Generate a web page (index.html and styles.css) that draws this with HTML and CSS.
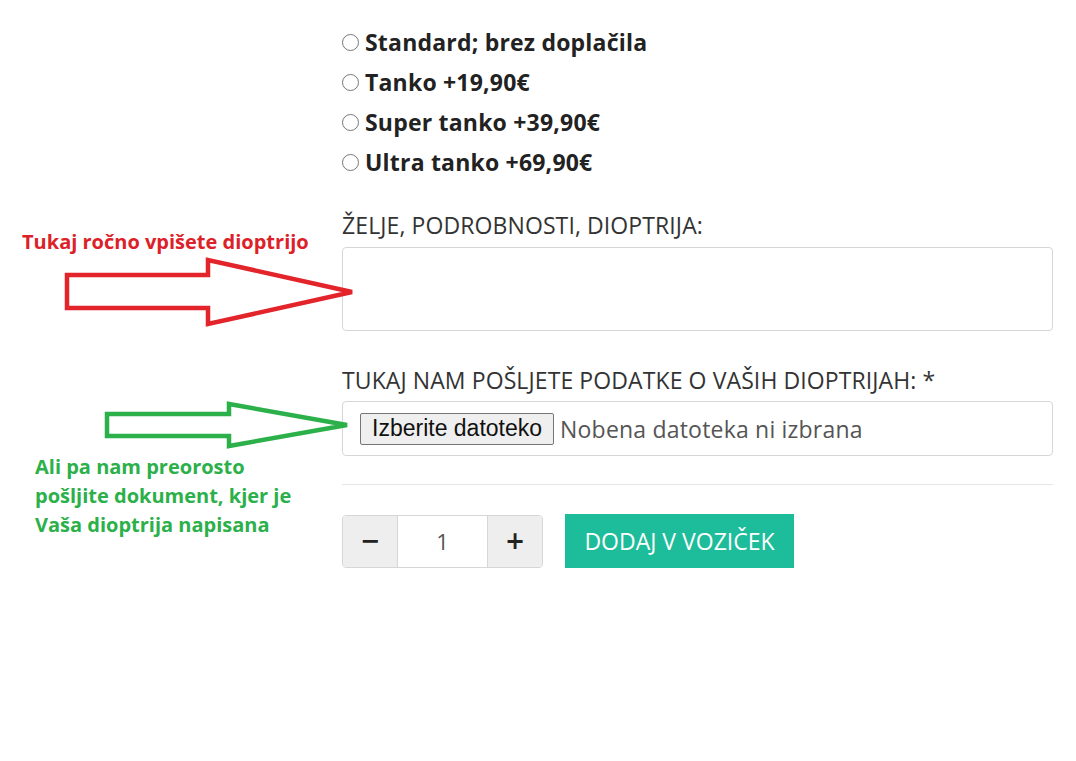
FILE: index.html
```html
<!DOCTYPE html>
<html lang="sl">
<head>
<meta charset="utf-8">
<link rel="stylesheet" href="styles.css">
</head>
<body>
<main class="form">
  <div class="options">
    <label class="opt"><input type="radio" name="d" class="radio"><span>Standard; brez doplačila</span></label>
    <label class="opt"><input type="radio" name="d" class="radio"><span>Tanko +19,90€</span></label>
    <label class="opt"><input type="radio" name="d" class="radio"><span>Super tanko +39,90€</span></label>
    <label class="opt"><input type="radio" name="d" class="radio"><span>Ultra tanko +69,90€</span></label>
  </div>
  <div class="field-label first">ŽELJE, PODROBNOSTI, DIOPTRIJA:</div>
  <div class="textarea"></div>
  <div class="field-label second">TUKAJ NAM POŠLJETE PODATKE O VAŠIH DIOPTRIJAH: *</div>
  <div class="filebox">
    <span class="filebtn">Izberite datoteko</span>
    <span class="filetext">Nobena datoteka ni izbrana</span>
  </div>
  <div class="rule"></div>
  <div class="cart">
    <div class="qty">
      <span class="qbtn minus">&#8722;</span>
      <span class="qval">1</span>
      <span class="qbtn plus">+</span>
    </div>
    <span class="add">DODAJ V VOZIČEK</span>
  </div>
</main>

<div class="note red-note">Tukaj ročno vpišete dioptrijo</div>
<div class="note green-note">Ali pa nam preorosto<br>pošljite dokument, kjer je<br>Vaša dioptrija napisana</div>
<svg class="arrows" width="1076" height="761" viewBox="0 0 1076 761">
  <polygon points="67,275 208,275 208,260 352,292 208,324 208,308 67,308" fill="none" stroke="#e3242b" stroke-width="4.5" stroke-linejoin="miter"/>
  <polygon points="107,414 229,414 229,404 347,425 229,446 229,436 107,436" fill="none" stroke="#2bb04a" stroke-width="4.5" stroke-linejoin="miter"/>
</svg>
</body>
</html>
```

FILE: styles.css
```css
html, body {
  margin: 0;
  padding: 0;
  background: #ffffff;
}
body {
  font-family: "Open Sans", "Liberation Sans", sans-serif;
  color: #333333;
  width: 1076px;
  height: 761px;
  position: relative;
  overflow: hidden;
}
.form {
  margin-left: 342px;
  width: 711px;
  padding-top: 22px;
}
.options {
  display: flex;
  flex-direction: column;
}
.opt {
  height: 40px;
  line-height: 40px;
  display: flex;
  align-items: center;
  gap: 6px;
  font-weight: 700;
  font-size: 23px;
  letter-spacing: 0.2px;
  color: #222222;
}
.radio {
  appearance: none;
  -webkit-appearance: none;
  width: 17px;
  height: 17px;
  margin: 0;
  border: 1px solid #767676;
  border-radius: 50%;
  background: #fff;
  box-sizing: border-box;
}
.field-label {
  font-size: 23px;
  line-height: 28px;
  letter-spacing: 0.1px;
  color: #333;
  white-space: nowrap;
}
.field-label.first { margin-top: 29px; }
.field-label.second { margin-top: 35px; }
.textarea {
  margin-top: 8px;
  height: 84px;
  border: 1px solid #d6d6d6;
  border-radius: 4px;
  box-sizing: border-box;
}
.filebox {
  margin-top: 7px;
  height: 55px;
  border: 1px solid #d6d6d6;
  border-radius: 4px;
  box-sizing: border-box;
  display: flex;
  align-items: center;
  padding-left: 17px;
  gap: 6px;
}
.filebtn {
  font-family: "Liberation Sans", Arial, sans-serif;
  font-size: 23px;
  color: #111;
  background: #efefef;
  border: 1px solid #767676;
  border-radius: 2px;
  height: 32px;
  box-sizing: border-box;
  padding: 0 11px 0 11px;
  display: flex;
  align-items: center;
}
.filetext {
  font-size: 23px;
  letter-spacing: 0.2px;
  color: #555;
}
.rule {
  margin-top: 28px;
  border-top: 1px solid #e5e5e5;
}
.cart {
  margin-top: 29px;
  display: flex;
  align-items: center;
  gap: 22px;
}
.qty {
  display: flex;
  width: 201px;
  height: 53px;
  border: 1px solid #d6d6d6;
  border-radius: 4px;
  overflow: hidden;
  box-sizing: border-box;
}
.qbtn {
  width: 55px;
  flex: none;
  box-sizing: border-box;
  background: #eeeeee;
  display: flex;
  align-items: center;
  justify-content: center;
  font-family: "DejaVu Sans", sans-serif;
  font-weight: 700;
  font-size: 24px;
  color: #222;
}
.qbtn.minus { border-right: 1px solid #d6d6d6; }
.qbtn.plus { border-left: 1px solid #d6d6d6; }
.qval {
  flex: 1;
  background: #fff;
  display: flex;
  align-items: center;
  justify-content: center;
  font-size: 22px;
  color: #555;
}
.add {
  width: 229px;
  height: 54px;
  background: #1dbc9a;
  color: #ffffff;
  font-size: 23px;
  display: flex;
  align-items: center;
  justify-content: center;
}
.note {
  position: absolute;
  font-weight: 700;
  white-space: nowrap;
}
.red-note {
  left: 22px;
  top: 228px;
  font-size: 20px;
  color: #dc2128;
}
.green-note {
  left: 35px;
  top: 452px;
  font-size: 20px;
  color: #2bb04a;
  line-height: 29px;
}
.arrows {
  position: absolute;
  left: 0;
  top: 0;
  pointer-events: none;
}
```
